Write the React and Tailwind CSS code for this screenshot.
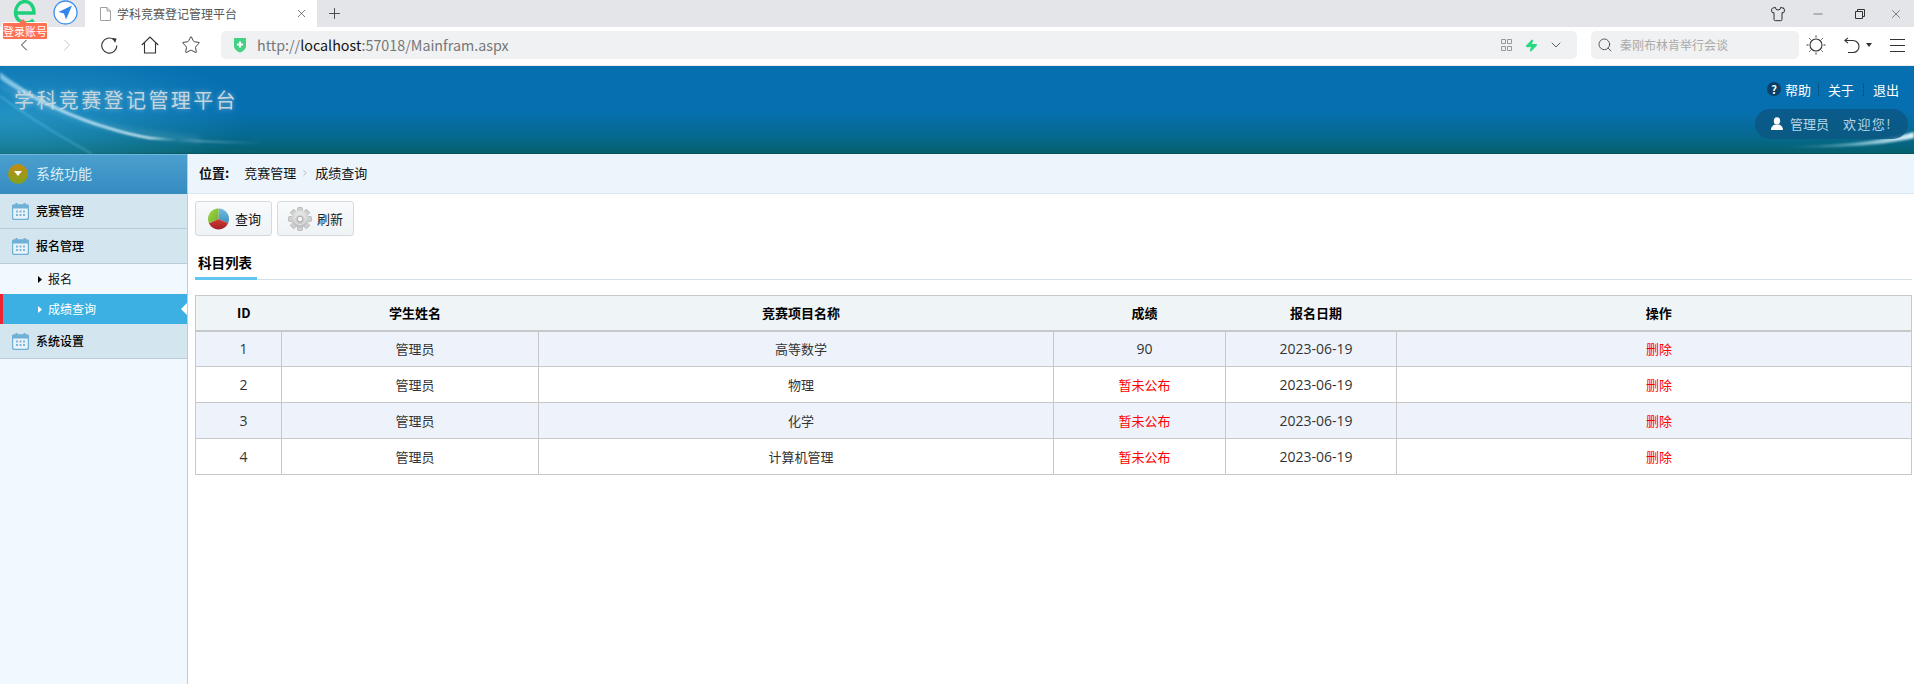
import React from "react";
import { ChevronLeft, ChevronRight, Star, Shirt, Search, ChevronDown, Plus, X, Minus, Zap } from "lucide-react";

const Cal = () => (
  <svg width="17" height="17" viewBox="0 0 17 17" className="shrink-0">
    <rect x="0.5" y="2" width="16" height="14.5" rx="2" fill="#e8f2f8" stroke="#6fb0d6" strokeWidth="1.4" />
    <rect x="0.5" y="2" width="16" height="3.5" fill="#6fb0d6" />
    <rect x="3.5" y="0" width="2" height="3.5" fill="#6fb0d6" />
    <rect x="11.5" y="0" width="2" height="3.5" fill="#6fb0d6" />
    {[4, 7.5, 11].map((x) => [7.5, 11].map((y) => <rect key={x + "-" + y} x={x} y={y} width="2" height="2" fill="#7db7da" />))}
  </svg>
);

const Pie = () => (
  <svg width="23" height="24" viewBox="0 0 24 24" className="shrink-0">
    <defs>
      <linearGradient id="pb" x1="0" y1="0" x2="0" y2="1"><stop offset="0" stopColor="#74bde0" /><stop offset="1" stopColor="#3d8fc0" /></linearGradient>
      <linearGradient id="pr" x1="0" y1="0" x2="0" y2="1"><stop offset="0" stopColor="#d03a34" /><stop offset="1" stopColor="#a32026" /></linearGradient>
      <linearGradient id="pg" x1="0" y1="0" x2="1" y2="1"><stop offset="0" stopColor="#a6d84a" /><stop offset="1" stopColor="#6fb02a" /></linearGradient>
    </defs>
    <path d="M12 12 L12 1 A11 11 0 0 1 22 16.5 Z" fill="url(#pb)" />
    <path d="M12 12 L22 16.5 A11 11 0 0 1 2 16.5 Z" fill="url(#pr)" />
    <path d="M12 12 L2 16.5 A11 11 0 0 1 12 1 Z" fill="url(#pg)" />
  </svg>
);

const Gear = () => {
  const teeth = [0, 45, 90, 135, 180, 225, 270, 315];
  return (
    <svg width="24" height="24" viewBox="0 0 24 24" className="shrink-0">
      <defs>
        <linearGradient id="gg" x1="0" y1="0" x2="0" y2="1"><stop offset="0" stopColor="#e6e6e6" /><stop offset="1" stopColor="#bcbcbc" /></linearGradient>
      </defs>
      {teeth.map((a) => (
        <rect key={a} x="9.5" y="0.5" width="5" height="6" rx="1" fill="#cfcfcf" stroke="#a4a4a4" strokeWidth="0.6" transform={`rotate(${a} 12 12)`} />
      ))}
      <circle cx="12" cy="12" r="8.5" fill="url(#gg)" />
      <circle cx="12" cy="12" r="5.5" fill="none" stroke="#f2f2f2" strokeWidth="0.7" />
      <circle cx="12" cy="12" r="2.8" fill="#f6f6f6" stroke="#9a9a9a" strokeWidth="0.8" />
    </svg>
  );
};

const Row = ({ id, score, odd }) => {
  const td = "border border-[#c8c8c8] pl-[10px] text-center align-middle";
  const num = "font-['Open_Sans',sans-serif] text-[14px]";
  return (
    <tr className={`h-[36px] text-[13px] text-[#333] ${odd ? "bg-[#eef3fb]" : "bg-white"}`}>
      <td className={`${td} ${num}`}>{id}</td>
      <td className={td}>管理员</td>
      <td className={td}>{["高等数学", "物理", "化学", "计算机管理"][id - 1]}</td>
      <td className={`${td} ${score === "90" ? num : "text-[#ff0000]"}`}>{score}</td>
      <td className={`${td} ${num}`}>2023-06-19</td>
      <td className={`${td} text-[#ff0000]`}>删除</td>
    </tr>
  );
};

export default function App() {
  const th = "pl-[10px] text-center align-middle font-bold text-[13px] text-black";
  return (
    <div className="relative h-[684px] w-[1914px] overflow-hidden bg-white font-['Noto_Sans_CJK_SC','Noto_Sans',sans-serif] text-[13px]">
      {/* browser tab strip */}
      <div className="flex h-[27px] items-center bg-[#e3e5e9]">
        <div className="flex h-full w-[85px] shrink-0 items-start">
          <svg width="24" height="24" viewBox="0 0 24 24" className="ml-[13px] shrink-0">
            <path d="M3 13 H21 C21 6 17 1.5 12 1.5 C6 1.5 2.5 7 2.5 12.5 C2.5 18.5 7 23 13 23 C16 23 18.5 22 20.5 20" fill="none" stroke="#1fd07a" strokeWidth="3.4" />
          </svg>
          <svg width="25" height="25" viewBox="0 0 25 25" className="ml-[16px] shrink-0">
            <circle cx="12.5" cy="12.5" r="11.5" fill="#fff" stroke="#3b8cf0" strokeWidth="1.3" />
            <path d="M19 5.5 L5.5 12 L11 13.5 L13 19.5 Z" fill="#2f86ee" />
          </svg>
        </div>
        <div className="flex h-full w-[232px] shrink-0 items-center bg-white pl-[15px] text-[12px] text-[#555]">
          <svg width="11" height="14" viewBox="0 0 11 14" className="shrink-0">
            <path d="M0.5 0.5 H7 L10.5 4 V13.5 H0.5 Z M7 0.5 V4 H10.5" fill="#fff" stroke="#a0a0a0" />
          </svg>
          <span className="ml-[6px] w-[178px]">学科竞赛登记管理平台</span>
          <X size={13} strokeWidth={1.2} color="#333" />
        </div>
        <Plus size={17} strokeWidth={1.2} color="#333" className="ml-[9px]" />
        <div className="flex-1" />
        <Shirt size={16} strokeWidth={1.4} color="#222" />
        <Minus size={14} strokeWidth={1} color="#333" className="ml-[25px]" />
        <svg width="10" height="10" viewBox="0 0 10 10" className="ml-[30px]">
          <path d="M0.5 2.5 H7.5 V9.5 H0.5 Z M2.5 2.5 V0.5 H9.5 V7.5 H7.5" fill="none" stroke="#333" />
        </svg>
        <X size={14} strokeWidth={1} color="#333" className="ml-[24px] mr-[11px]" />
      </div>

      {/* login badge */}
      <div className="absolute left-[2px] top-[22px] flex h-[18px] w-[46px] items-center justify-center rounded-[2px] border border-white bg-[#ff7152] text-[11px] leading-none text-white">
        <span className="absolute left-[16px] top-[-4px] h-0 w-0 border-x-[4px] border-b-[4px] border-x-transparent border-b-[#ff7152]" />
        登录账号
      </div>

      {/* browser toolbar */}
      <div className="flex h-[39px] items-center border-b border-[#eeeeee] bg-white pb-[2px]">
        <ChevronLeft size={20} strokeWidth={1.2} color="#333" className="ml-[14px]" />
        <ChevronRight size={20} strokeWidth={1.2} color="#c4c4c4" className="ml-[23px]" />
        <svg width="17" height="17" viewBox="0 0 18 18" className="ml-[24px]">
          <path d="M13.5 2.6 A8 8 0 1 0 16.8 9" fill="none" stroke="#333" strokeWidth="1.2" />
          <path d="M11.5 1 L16.5 1.5 L15 6 Z" fill="#333" />
        </svg>
        <svg width="18" height="18" viewBox="0 0 18 18" className="ml-[23px]">
          <path d="M0.8 9 L9 1 L17.2 9 M3.5 7 V17 H14.5 V7" fill="none" stroke="#333" strokeWidth="1.1" />
        </svg>
        <Star size={20} strokeWidth={1.1} color="#333" className="ml-[22px]" />
        <div className="ml-[20px] flex h-[28px] w-[1356px] items-center rounded-[5px] bg-[#f0f1f3] pl-[12px]">
          <svg width="14" height="16" viewBox="0 0 14 16" className="shrink-0">
            <path d="M1 1 H13 V9 C13 12 10 14.5 7 15.5 C4 14.5 1 12 1 9 Z" fill="#45d184" />
            <path d="M7 4.5 V10.5 M4 7.5 H10" stroke="#fff" strokeWidth="2" />
          </svg>
          <span className="ml-[10px] w-[1244px] text-[14.3px] text-[#777]">http://<span className="text-[#111]">localhost</span>:57018/Mainfram.aspx</span>
          <svg width="11" height="12" viewBox="0 0 11 12" className="shrink-0">
            <path d="M0.5 0.5 H4.5 V4.5 H0.5 Z M6.5 0.5 H10.5 V4.5 H6.5 Z M0.5 7.5 H4.5 V11.5 H0.5 Z M6.5 7.5 H10.5 V11.5 H6.5 Z" fill="none" stroke="#999" />
          </svg>
          <Zap size={13} fill="#25d97f" stroke="#25d97f" className="ml-[13px]" />
          <ChevronDown size={16} strokeWidth={1.4} color="#555" className="ml-[10px]" />
        </div>
        <div className="ml-[14px] flex h-[28px] w-[208px] items-center rounded-[5px] bg-[#f0f1f3] pl-[6px] text-[12px] text-[#aaaaaa]">
          <Search size={16} strokeWidth={1.3} color="#444" />
          <span className="ml-[7px]">秦刚布林肯举行会谈</span>
        </div>
        <svg width="20" height="20" viewBox="0 0 20 20" className="ml-[7px]">
          <circle cx="10" cy="10" r="6" fill="none" stroke="#333" strokeWidth="1.1" />
          <path d="M10 0.5 V2.5 M10 17.5 V19.5 M0.5 10 H2.5 M17.5 10 H19.5 M3.3 3.3 L4.6 4.6 M15.4 15.4 L16.7 16.7 M3.3 16.7 L4.6 15.4 M15.4 4.6 L16.7 3.3" stroke="#333" />
        </svg>
        <svg width="17" height="17" viewBox="0 0 17 17" className="ml-[18px]">
          <path d="M1 3.5 H9 A6 6 0 0 1 9 15.5 H4 M4 0.8 L0.8 3.5 L4 6.2" fill="none" stroke="#333" strokeWidth="1.1" />
        </svg>
        <svg width="6" height="4" viewBox="0 0 6 4" className="ml-[5px]"><path d="M0 0 H6 L3 4 Z" fill="#333" /></svg>
        <svg width="15" height="13" viewBox="0 0 15 13" className="ml-[18px]">
          <path d="M0 0.5 H15 M0 6.5 H15 M0 12.5 H15" stroke="#333" />
        </svg>
      </div>

      {/* site header */}
      <header className="relative flex h-[88px] items-start justify-between bg-[linear-gradient(180deg,#066fb0_0%,#066fb0_52%,#06698f_80%,#05616f_98%,#044f58_100%)]">
        <svg className="absolute inset-0" width="1914" height="88" viewBox="0 0 1914 88">
          <defs>
            <linearGradient id="sw" x1="0" x2="1"><stop offset="0" stopColor="#bfeaff" stopOpacity=".6" /><stop offset=".55" stopColor="#f2fcff" stopOpacity="1" /><stop offset="1" stopColor="#aee6ff" stopOpacity="0" /></linearGradient>
            <linearGradient id="sr" x1="0" x2="1"><stop offset="0" stopColor="#9fe6ff" stopOpacity="0" /><stop offset="1" stopColor="#e8faff" stopOpacity=".95" /></linearGradient>
            <radialGradient id="gl" cx="0.05" cy="0.6" r="0.9"><stop offset="0" stopColor="#3bb0d6" stopOpacity=".55" /><stop offset="1" stopColor="#3bb0d6" stopOpacity="0" /></radialGradient>
            <filter id="bl"><feGaussianBlur stdDeviation="0.8" /></filter>
            <filter id="bl2"><feGaussianBlur stdDeviation="3" /></filter>
          </defs>
          <rect x="0" y="0" width="260" height="88" fill="url(#gl)" />
          <path d="M0 6 C40 38 100 62 150 71 C190 76 230 78 270 77 L150 73 C90 63 30 34 0 13 Z" fill="url(#sw)" filter="url(#bl)" />
          <path d="M0 30 C40 60 70 75 92 88" fill="none" stroke="#7fd6ee" strokeWidth="1.2" opacity=".5" filter="url(#bl)" />
          <path d="M0 18 C50 50 110 66 200 74" fill="none" stroke="#c8f0ff" strokeWidth="2" opacity=".4" filter="url(#bl2)" />
          <path d="M1780 81 C1830 80 1880 76 1914 66 L1914 72 C1880 80 1830 82 1780 81 Z" fill="url(#sr)" filter="url(#bl)" />
        </svg>
        <h1 className="relative ml-[14px] mt-[20px] text-[20px] font-normal leading-[28px] tracking-[2.4px] text-[#c3d5df] [text-shadow:0_0_5px_rgba(255,255,255,0.45)]">学科竞赛登记管理平台</h1>
        <div className="relative mr-[6px] mt-[15px] flex flex-col items-end">
          <div className="mr-[9px] flex h-[16px] items-center text-[13px] leading-none text-white">
            <span className="mr-[4px] flex h-[14px] w-[14px] items-center justify-center rounded-full bg-[#0a3f68] text-[11px] font-bold">?</span>
            帮助
            <span className="ml-[7px] mr-[9px] h-[13px] border-l border-dotted border-[#0a3f68]" />
            关于
            <span className="mx-[9px] h-[13px] border-l border-dotted border-[#0a3f68]" />
            退出
          </div>
          <div className="mt-[12px] flex h-[30px] w-[153px] items-center rounded-full bg-[#0b5682]/80 pl-[15px] text-[13px] text-[#b5d6e6]">
            <svg width="14" height="14" viewBox="0 0 14 14" className="shrink-0">
              <ellipse cx="7" cy="4" rx="3.2" ry="3.8" fill="#fff" />
              <path d="M1 13 C1 9.5 3.5 8 5 7.5 C6 8.3 8 8.3 9 7.5 C10.5 8 13 9.5 13 13 Z" fill="#fff" />
            </svg>
            <span className="ml-[6px]">管理员</span>
            <span className="ml-[14px] tracking-[1.4px]">欢迎您!</span>
          </div>
        </div>
      </header>

      {/* body */}
      <div className="flex h-[530px]">
        <aside className="w-[188px] shrink-0 border-r border-[#a9d3e6] bg-[#f2f9fe]">
          <div className="flex h-[40px] items-center border-t border-[#6cb8de] bg-[linear-gradient(180deg,#4a9fce,#358cc0)] pb-[2px] pl-[8px] text-[14px] text-[#d9eef9]">
            <span className="flex h-[20px] w-[20px] items-center justify-center rounded-full bg-[linear-gradient(180deg,#c48a14,#7fa31a)]">
              <svg width="8" height="5" viewBox="0 0 8 5"><path d="M0 0 H8 L4 5 Z" fill="#fff" /></svg>
            </span>
            <span className="ml-[8px]">系统功能</span>
          </div>
          <div className="flex h-[35px] items-center gap-[7px] border-b border-[#b9ccd9] bg-[#d3e5ef] pl-[12px] text-[12px] font-medium text-black"><Cal />竞赛管理</div>
          <div className="flex h-[35px] items-center gap-[7px] border-b border-[#b9ccd9] bg-[#d3e5ef] pl-[12px] text-[12px] font-medium text-black"><Cal />报名管理</div>
          <div className="flex h-[30px] items-center pl-[38px] text-[12px] text-[#111]">
            <svg width="4" height="7" viewBox="0 0 4 7"><path d="M0 0 L4 3.5 L0 7 Z" fill="#000" /></svg>
            <span className="ml-[6px]">报名</span>
          </div>
          <div className="relative flex h-[30px] items-center border-l-[3px] border-[#ee2430] bg-[#3cb0e3] pl-[35px] text-[12px] text-white">
            <svg width="4" height="7" viewBox="0 0 4 7"><path d="M0 0 L4 3.5 L0 7 Z" fill="#fff" /></svg>
            <span className="ml-[6px]">成绩查询</span>
            <span className="absolute right-0 top-[9px] h-0 w-0 border-y-[6px] border-r-[6px] border-y-transparent border-r-white" />
          </div>
          <div className="flex h-[35px] items-center gap-[7px] border-b border-[#b9ccd9] bg-[#d3e5ef] pl-[12px] text-[12px] font-medium text-black"><Cal />系统设置</div>
        </aside>

        <main className="flex-1">
          <div className="flex h-[40px] items-center border-b border-[#d8e6ef] bg-[#ecf5fb] pb-[2px] pl-[11px] text-[13px] text-[#111]">
            <span className="font-bold">位置:</span>
            <span className="ml-[15px]">竞赛管理</span>
            <ChevronRight size={10} strokeWidth={1.5} color="#8f9aa1" className="mx-[4px]" />
            <span className="ml-[1px]">成绩查询</span>
          </div>
          <div className="pl-[7px] pr-[3px] pt-[7px]">
            <div className="flex gap-[5px]">
              <button className="flex h-[35px] w-[77px] items-center rounded-[3px] border border-[#d5dade] bg-[linear-gradient(180deg,#f8fafb,#eff3f6)] pl-[11px] text-[13px] text-[#111]">
                <Pie /><span className="ml-[5px]">查询</span>
              </button>
              <button className="flex h-[35px] w-[77px] items-center rounded-[3px] border border-[#d5dade] bg-[linear-gradient(180deg,#f8fafb,#eff3f6)] pl-[10px] text-[13px] text-[#222]">
                <Gear /><span className="ml-[5px]">刷新</span>
              </button>
            </div>
            <div className="mt-[14px] h-[30px] border-b border-[#d3e0e8]">
              <div className="h-[30px] w-[62px] border-b-[3px] border-[#5fc6f0] pl-[3px] text-[13.5px] font-bold leading-[24px] text-black">科目列表</div>
            </div>
            <table className="mt-[15px] w-[1716px] table-fixed border-collapse">
              <colgroup>
                <col className="w-[86px]" /><col className="w-[257px]" /><col className="w-[515px]" /><col className="w-[172px]" /><col className="w-[171px]" /><col className="w-[515px]" />
              </colgroup>
              <thead>
                <tr className="h-[35px] border border-b-2 border-[#c8c8c8] bg-[#eff4f7]">
                  <th className={th}>ID</th><th className={th}>学生姓名</th><th className={th}>竞赛项目名称</th><th className={th}>成绩</th><th className={th}>报名日期</th><th className={th}>操作</th>
                </tr>
              </thead>
              <tbody>
                <Row id={1} score="90" odd />
                <Row id={2} score="暂未公布" />
                <Row id={3} score="暂未公布" odd />
                <Row id={4} score="暂未公布" />
              </tbody>
            </table>
          </div>
        </main>
      </div>
    </div>
  );
}
